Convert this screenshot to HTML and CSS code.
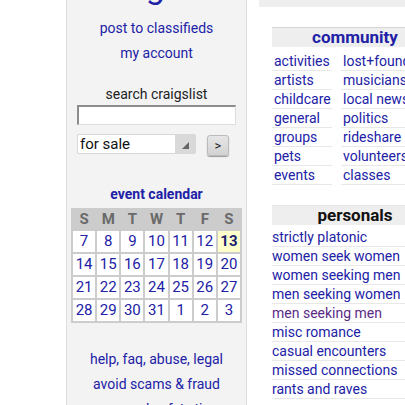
FILE: index.html
```html
<!DOCTYPE html>
<html lang="en">
<head>
    <meta charset="UTF-8">
    <meta name="viewport" content="width=device-width, initial-scale=1.0">
    <title>craigslist</title>
    <link rel="stylesheet" href="styles.css">
</head>
<body>
    <div class="page">
        <div class="leftbar">
            <h1 class="logo"><a href="#">craigslist</a></h1>

            <ul class="side-links">
                <li><a href="#">post to classifieds</a></li>
                <li><a href="#">my account</a></li>
            </ul>

            <form class="search" action="#">
                <div class="search-title">search craigslist</div>
                <input class="query" type="text" name="query">
                <div class="search-row">
                    <div class="cat-select">for sale<span class="arrow"></span></div>
                    <button class="go" type="button">&gt;</button>
                </div>
            </form>

            <div class="calendar">
                <div class="cal-title"><a href="#">event calendar</a></div>
                <div class="cal-grid">
                    <div class="dow">S</div><div class="dow">M</div><div class="dow">T</div><div class="dow">W</div><div class="dow">T</div><div class="dow">F</div><div class="dow">S</div>
                    <a class="day" href="#">7</a><a class="day" href="#">8</a><a class="day" href="#">9</a><a class="day" href="#">10</a><a class="day" href="#">11</a><a class="day" href="#">12</a><a class="day today" href="#">13</a>
                    <a class="day" href="#">14</a><a class="day" href="#">15</a><a class="day" href="#">16</a><a class="day" href="#">17</a><a class="day" href="#">18</a><a class="day" href="#">19</a><a class="day" href="#">20</a>
                    <a class="day" href="#">21</a><a class="day" href="#">22</a><a class="day" href="#">23</a><a class="day" href="#">24</a><a class="day" href="#">25</a><a class="day" href="#">26</a><a class="day" href="#">27</a>
                    <a class="day" href="#">28</a><a class="day" href="#">29</a><a class="day" href="#">30</a><a class="day" href="#">31</a><a class="day" href="#">1</a><a class="day" href="#">2</a><a class="day" href="#">3</a>
                </div>
            </div>

            <ul class="side-links footer-links">
                <li><a href="#">help, faq, abuse, legal</a></li>
                <li><a href="#">avoid scams &amp; fraud</a></li>
                <li><a href="#">personal safety tips</a></li>
            </ul>
        </div>

        <div class="main">
            <div class="topban"></div>

            <div class="col community">
                <h4 class="ban"><a href="#">community</a></h4>
                <div class="cols">
                    <ul>
                        <li><a href="#">activities</a></li>
                        <li><a href="#">artists</a></li>
                        <li><a href="#">childcare</a></li>
                        <li><a href="#">general</a></li>
                        <li><a href="#">groups</a></li>
                        <li><a href="#">pets</a></li>
                        <li><a href="#">events</a></li>
                    </ul>
                    <ul>
                        <li><a href="#">lost+found</a></li>
                        <li><a href="#">musicians</a></li>
                        <li><a href="#">local news</a></li>
                        <li><a href="#">politics</a></li>
                        <li><a href="#">rideshare</a></li>
                        <li><a href="#">volunteers</a></li>
                        <li><a href="#">classes</a></li>
                    </ul>
                </div>
            </div>

            <div class="col personals">
                <h4 class="ban"><a class="plain" href="#">personals</a></h4>
                <ul>
                    <li><a href="#">strictly platonic</a></li>
                    <li><a href="#">women seek women</a></li>
                    <li><a href="#">women seeking men</a></li>
                    <li><a href="#">men seeking women</a></li>
                    <li><a class="visited" href="#">men seeking men</a></li>
                    <li><a href="#">misc romance</a></li>
                    <li><a href="#">casual encounters</a></li>
                    <li><a href="#">missed connections</a></li>
                    <li><a href="#">rants and raves</a></li>
                </ul>
            </div>
        </div>
    </div>
</body>
</html>
```

FILE: styles.css
```css
html, body {
    margin: 0;
    overflow: hidden;
    background: #fff;
    font-family: Roboto, "Liberation Sans", Arial, sans-serif;
    font-size: 14px;
    color: #222;
}
a {
    color: #2121a6;
    text-decoration: none;
}
ul {
    list-style: none;
    margin: 0;
    padding: 0;
}
.page {
    display: flex;
    align-items: flex-start;
    gap: 12px;
    padding-left: 66px;
    width: 600px;
}

/* left column */
.leftbar {
    width: 179px;
    flex: none;
    background-color: #f3f3f3;
    border-left: 1px solid #ddd;
    border-right: 1px solid #ddd;
    text-align: center;
    padding-bottom: 20px;
}
.logo {
    margin: -34px 0 0;
    padding-left: 5px;
    font-size: 34px;
    line-height: 40px;
    font-weight: normal;
}
.side-links {
    margin-top: 10px;
    line-height: 25px;
}
.search {
    margin: 19px 0 0;
    padding: 0 10px;
}
.search-title {
    line-height: 18px;
}
.query {
    display: block;
    box-sizing: border-box;
    width: 159px;
    height: 20px;
    margin-top: 2px;
    border: 1px solid #ddd;
    border-top: 2px solid #8c8c8c;
    border-left: 2px solid #8c8c8c;
    background: #fff;
}
.search-row {
    display: flex;
    align-items: flex-start;
    gap: 11px;
    margin-top: 9px;
}
.cat-select {
    box-sizing: border-box;
    position: relative;
    width: 119px;
    height: 20px;
    padding-left: 2px;
    border: 1px solid #d8d8d8;
    border-radius: 2px;
    background: linear-gradient(to right, #fff 97px, #d9d9d9 97px);
    text-align: left;
    font-size: 15px;
    line-height: 18px;
    color: #111;
}
.cat-select .arrow {
    position: absolute;
    right: 6px;
    bottom: 4px;
    width: 0;
    height: 0;
    border-left: 7px solid transparent;
    border-bottom: 7px solid #666;
}
.go {
    box-sizing: border-box;
    width: 22px;
    height: 21px;
    margin-top: 1px;
    padding: 0;
    border: 1px solid #bbb;
    border-radius: 3px;
    background: linear-gradient(#e6e6e6, #d2d2d2);
    box-shadow: 0 1px 1px #999;
    font-family: inherit;
    font-size: 13px;
    color: #222;
}

/* calendar */
.calendar {
    margin-top: 29px;
    padding: 0 4px;
}
.cal-title {
    line-height: 18px;
    font-weight: bold;
}
.cal-grid {
    display: grid;
    grid-template-columns: repeat(7, 1fr);
    grid-template-rows: 19px;
    grid-auto-rows: 21px;
    gap: 2px;
    margin-top: 5px;
    padding: 2px;
    background-color: #ccc;
}
.dow {
    font-size: 15px;
    font-weight: bold;
    line-height: 19px;
    color: #6a6a6a;
}
.day {
    background-color: #fff;
    font-size: 15px;
    line-height: 21px;
}
.day.today {
    background-color: #ffffcc;
    font-weight: bold;
    color: #1c1c6e;
}
.footer-links {
    margin-top: 24px;
}

/* main column */
.main {
    width: 200px;
    flex: none;
}
.topban {
    height: 7px;
    background-color: #eee;
}
.col {
    width: 166px;
    margin-left: 13px;
}
.ban {
    margin: 0;
    border-top: 1px solid #d6d6d6;
    background-color: #eee;
    text-align: center;
    font-size: 17px;
    line-height: 19px;
}
.ban .plain {
    color: #111;
}
.community {
    margin-top: 20px;
}
.cols {
    display: grid;
    grid-template-columns: 60px 1fr;
    gap: 9px;
    margin-top: 5px;
}
.col li {
    line-height: 18px;
    border-bottom: 1px solid #e8e8e8;
    white-space: nowrap;
}
.cols li {
    padding-left: 2px;
}
.personals {
    margin-top: 20px;
}
.personals .ban {
    border-top-color: #e6e6e6;
}
.personals ul {
    margin-top: 3px;
}
.visited {
    color: #5b2a86;
}
```
